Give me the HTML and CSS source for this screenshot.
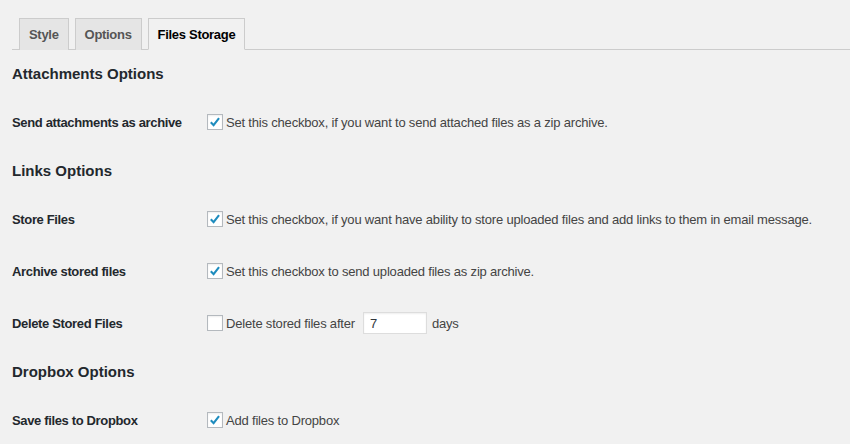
FILE: index.html
```html
<!DOCTYPE html>
<html>
<head>
<meta charset="utf-8">
<link rel="stylesheet" href="styles.css">
</head>
<body>
<div class="wrap">
  <nav class="tabs">
    <a class="tab">Style</a>
    <a class="tab">Options</a>
    <a class="tab active">Files Storage</a>
  </nav>

  <h2 class="section">Attachments Options</h2>
  <div class="row">
    <div class="label">Send attachments as archive</div>
    <div class="field"><span class="cb checked"><svg viewBox="0 0 16 16"><path d="M3.2 8.2 L6.4 11.6 L12.6 3.6" /></svg></span><span class="desc">Set this checkbox, if you want to send attached files as a zip archive.</span></div>
  </div>

  <h2 class="section">Links Options</h2>
  <div class="row">
    <div class="label">Store Files</div>
    <div class="field"><span class="cb checked"><svg viewBox="0 0 16 16"><path d="M3.2 8.2 L6.4 11.6 L12.6 3.6" /></svg></span><span class="desc">Set this checkbox, if you want have ability to store uploaded files and add links to them in email message.</span></div>
  </div>
  <div class="row">
    <div class="label">Archive stored files</div>
    <div class="field"><span class="cb checked"><svg viewBox="0 0 16 16"><path d="M3.2 8.2 L6.4 11.6 L12.6 3.6" /></svg></span><span class="desc">Set this checkbox to send uploaded files as zip archive.</span></div>
  </div>
  <div class="row">
    <div class="label">Delete Stored Files</div>
    <div class="field"><span class="cb"></span><span class="desc">Delete stored files after</span><span class="num">7</span><span class="desc days">days</span></div>
  </div>

  <h2 class="section">Dropbox Options</h2>
  <div class="row">
    <div class="label">Save files to Dropbox</div>
    <div class="field"><span class="cb checked"><svg viewBox="0 0 16 16"><path d="M3.2 8.2 L6.4 11.6 L12.6 3.6" /></svg></span><span class="desc">Add files to Dropbox</span></div>
  </div>
</div>
</body>
</html>
```

FILE: styles.css
```css
html, body {
  margin: 0;
  padding: 0;
  background: #f1f1f1;
}
body {
  font-family: "Liberation Sans", Arial, sans-serif;
  font-size: 13px;
  color: #444;
  width: 850px;
  height: 444px;
  overflow: hidden;
}
.wrap {
  padding-left: 12px;
}
.tabs {
  display: flex;
  align-items: flex-end;
  gap: 6px;
  padding-top: 18px;
  padding-left: 7px;
  border-bottom: 1px solid #ccc;
  height: 31px;
  margin-bottom: 2px;
}
.tab {
  display: flex;
  align-items: center;
  box-sizing: border-box;
  padding: 0 9px;
  border: 1px solid #ccc;
  border-bottom: none;
  background: #e5e5e5;
  color: #555;
  font-weight: bold;
  font-size: 13px;
  letter-spacing: -0.3px;
  margin-bottom: -1px;
  height: 32px;
}
.tab.active {
  background: #f1f1f1;
  color: #000;
  border-bottom: 1px solid #f1f1f1;
}
.section {
  margin: 0;
  height: 44px;
  box-sizing: border-box;
  padding-bottom: 2px;
  display: flex;
  align-items: center;
  font-size: 15px;
  font-weight: bold;
  color: #23282d;
}
.row {
  display: flex;
  align-items: center;
  height: 52px;
}
.row + .section {
  margin-top: 1px;
}
.label {
  width: 195px;
  font-weight: bold;
  color: #23282d;
  letter-spacing: -0.35px;
}
.field {
  display: flex;
  align-items: center;
}
.cb {
  width: 16px;
  height: 16px;
  box-sizing: border-box;
  border: 1px solid #b4b9be;
  background: #fff;
  box-shadow: inset 0 1px 2px rgba(0,0,0,0.07);
  margin-right: 3px;
  display: flex;
}
.cb svg {
  width: 14px;
  height: 14px;
  fill: none;
  stroke: #1e8cbe;
  stroke-width: 2.4;
}
.desc {
  color: #444;
  letter-spacing: -0.19px;
}
.num {
  width: 64px;
  height: 22px;
  box-sizing: border-box;
  background: #fff;
  border: 1px solid #ddd;
  box-shadow: inset 0 1px 2px rgba(0,0,0,0.07);
  margin-left: 8px;
  padding-left: 6px;
  display: flex;
  align-items: center;
  color: #32373c;
}
.days {
  margin-left: 5px;
}
```
